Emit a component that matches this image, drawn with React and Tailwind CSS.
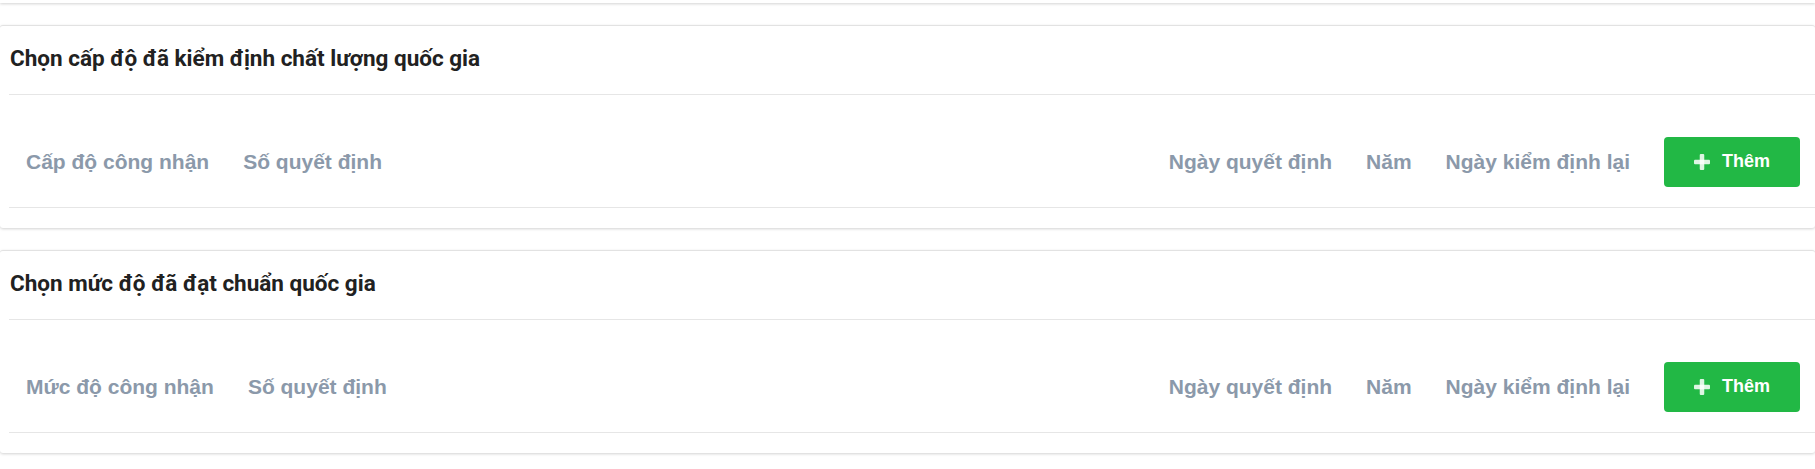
import React from 'react';

const labelCls = "px-[17px] text-[21px] font-bold text-[#8b99aa] whitespace-nowrap";

function PlusIcon() {
  return (
    <svg width="16" height="16" viewBox="0 0 16 16" className="shrink-0">
      <rect x="5.75" y="0" width="4.5" height="16" rx="1" fill="#ffffff" fillOpacity="0.85" />
      <rect x="0" y="5.75" width="16" height="4.5" rx="1" fill="#ffffff" fillOpacity="0.85" />
    </svg>
  );
}

function Section({ title, first }) {
  return (
    <div className="mt-[22px] bg-white rounded-[3px] border-t border-[#e2e2e2] shadow-[0_1px_3px_rgba(0,0,0,0.18)] pl-[8px] pb-[20px]">
      <div className="h-[69px] flex items-center border-b border-[#e6e6e6] pl-[1px] ml-px pb-[2px]">
        <h2 className="text-[22.5px] font-bold text-[#212121] font-['Roboto',sans-serif]">{title}</h2>
      </div>
      <div className="pt-[21px]">
        <div className="h-[92px] flex items-center border-b border-[#e6e6e6] ml-px font-['Liberation_Sans',Arial,sans-serif]">
          <span className={labelCls}>{first}</span>
          <span className={labelCls}>Số quyết định</span>
          <div className="flex-1" />
          <span className={labelCls}>Ngày quyết định</span>
          <span className={labelCls}>Năm</span>
          <span className={labelCls}>Ngày kiểm định lại</span>
          <div className="pl-[17px] pr-[15px]">
            <button className="w-[136px] h-[50px] rounded-[4px] bg-[#22b845] text-white text-[18px] font-bold flex items-center justify-center gap-[12px]">
              <PlusIcon />
              <span>Thêm</span>
            </button>
          </div>
        </div>
      </div>
    </div>
  );
}

export default function App() {
  return (
    <div className="min-h-screen bg-white overflow-hidden">
      <div className="h-[3px] bg-white shadow-[0_1px_3px_rgba(0,0,0,0.18)]" />
      <Section title="Chọn cấp độ đã kiểm định chất lượng quốc gia" first="Cấp độ công nhận" />
      <Section title="Chọn mức độ đã đạt chuẩn quốc gia" first="Mức độ công nhận" />
    </div>
  );
}
